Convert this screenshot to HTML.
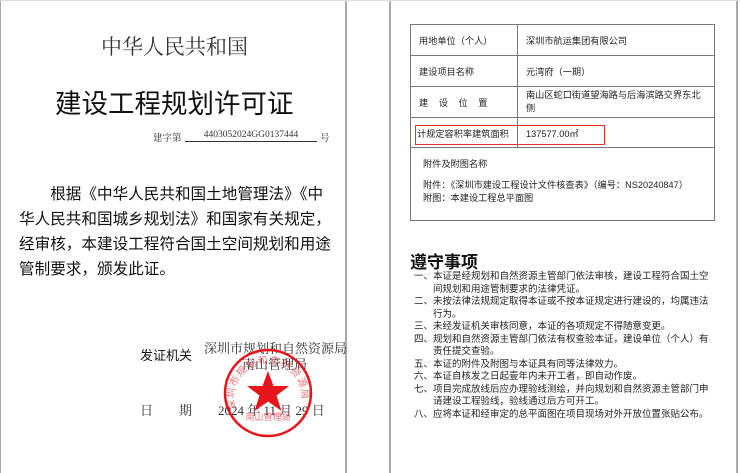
<!DOCTYPE html>
<html><head><meta charset="utf-8"><style>
html,body{margin:0;width:740px;height:473px;overflow:hidden;}
body{background:#fff;position:relative;font-family:"Liberation Sans","Noto Sans CJK SC",sans-serif;}
.a{position:absolute;white-space:nowrap;}
.serif{font-family:"Liberation Serif","Noto Serif CJK SC",serif;}
table{position:absolute;left:410px;top:24px;width:305px;border-collapse:collapse;font-size:9.2px;color:#222;table-layout:fixed;}
td{border:1px solid #777;padding:0 0 0 8px;vertical-align:middle;white-space:nowrap;overflow:hidden;}
.n{position:absolute;left:414px;font-size:9.5px;color:#222;line-height:12.5px;white-space:nowrap;}
</style></head><body>
<div class="a" style="left:0;top:0;width:1px;height:473px;background:#aaa"></div>
<div class="a" style="left:345px;top:0;width:2px;height:473px;background:#aaa"></div>
<div class="a" style="left:389px;top:0;width:2px;height:473px;background:#aaa"></div>
<div class="a" style="left:736px;top:0;width:2px;height:473px;background:#aaa"></div>
<div class="a" style="left:0;top:0;width:740px;height:1px;background:#ddd"></div>

<div class="a serif" style="left:101px;top:31px;font-size:21px;color:#333">中华人民共和国</div>
<div class="a" style="left:55px;top:82px;font-size:26.5px;color:#111">建设工程规划许可证</div>
<div class="a serif" style="left:153px;top:130px;font-size:9.5px;color:#333">建字第</div>
<div class="a serif" style="left:185px;top:130px;width:132px;border-bottom:1px solid #333;font-size:9.5px;color:#333;text-align:center;padding-bottom:1px">4403052024GG0137444</div>
<div class="a serif" style="left:320px;top:130px;font-size:9.5px;color:#333">号</div>
<div class="a" style="left:19px;top:182px;font-size:15.6px;line-height:25px;color:#111">　　根据《中华人民共和国土地管理法》《中<br>华人民共和国城乡规划法》和国家有关规定，<br>经审核，本建设工程符合国土空间规划和用途<br>管制要求，颁发此证。</div>

<div class="a" style="left:140px;top:345px;font-size:13px;color:#111">发证机关</div>
<div class="a serif" style="left:204px;top:338px;font-size:13px;color:#333">深圳市规划和自然资源局</div>
<div class="a serif" style="left:242px;top:354px;font-size:13px;color:#333">南山管理局</div>
<div class="a serif" style="left:140px;top:400px;font-size:13px;color:#333">日　　期　　2024 年 11 月 29 日</div>
<svg class="a" style="left:222px;top:347px" width="92" height="92" viewBox="0 0 92 92">
<circle cx="46" cy="46" r="43" fill="none" stroke="#e8141c" stroke-width="2.5"/>
<polygon points="46,24 51.5,39 67,39 54.5,48.5 59.5,64 46,54.5 32.5,64 37.5,48.5 25,39 40.5,39" fill="#e8141c"/>
<path id="arc" d="M14,62 A34,34 0 1,1 78,62" fill="none"/>
<text font-size="10" fill="#e8141c" opacity="0.6" font-family="Noto Sans CJK SC" letter-spacing="1"><textPath href="#arc">深圳市规划和自然资源局</textPath></text>
<text x="46" y="73" text-anchor="middle" font-size="9" fill="#e8141c" opacity="0.6" font-family="Noto Sans CJK SC">南山管理局</text>
</svg>

<table>
<col style="width:107px"><col>
<tr style="height:31px"><td>用地单位（个人）</td><td>深圳市航运集团有限公司</td></tr>
<tr style="height:31px"><td>建设项目名称</td><td>元湾府（一期）</td></tr>
<tr style="height:31px"><td style="letter-spacing:4px">建 设 位 置</td><td style="line-height:13px">南山区蛇口街道望海路与后海滨路交界东北<br>侧</td></tr>
<tr style="height:30px"><td style="padding-left:6px">计规定容积率建筑面积</td><td>137577.00㎡</td></tr>
<tr style="height:73px"><td colspan="2" style="vertical-align:top;padding:10px 12px;line-height:13px">附件及附图名称<div style="height:8px"></div>附件：《深圳市建设工程设计文件核查表》（编号：NS20240847）<br>附图：本建设工程总平面图</td></tr>
</table>
<div class="a" style="left:415px;top:125px;width:188px;height:18px;border:1px solid #e03030"></div>

<div class="a" style="left:410px;top:248px;font-size:17px;font-weight:bold;color:#111">遵守事项</div>
<div class="n" style="top:271px">一、本证是经规划和自然资源主管部门依法审核，建设工程符合国土空<br>　　间规划和用途管制要求的法律凭证。<br>二、未按法律法规规定取得本证或不按本证规定进行建设的，均属违法<br>　　行为。<br>三、未经发证机关审核同意，本证的各项规定不得随意变更。<br>四、规划和自然资源主管部门依法有权查验本证，建设单位（个人）有<br>　　责任提交查验。<br>五、本证的附件及附图与本证具有同等法律效力。<br>六、本证自核发之日起壹年内未开工者，即自动作废。<br>七、项目完成放线后应办理验线测绘，并向规划和自然资源主管部门申<br>　　请建设工程验线，验线通过后方可开工。<br>八、应将本证和经审定的总平面图在项目现场对外开放位置张贴公布。</div>
</body></html>
